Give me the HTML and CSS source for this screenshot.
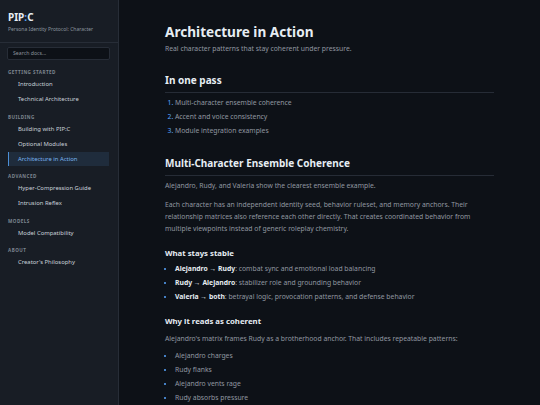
FILE: index.html
```html
<!DOCTYPE html>
<html lang="en">
<head>
  <meta charset="UTF-8">
  <meta name="viewport" content="width=device-width, initial-scale=1.0">
  <title>Architecture in Action - PIP:C</title>
  <link rel="stylesheet" href="styles.css">
</head>
<body>
<div class="layout">
  <!-- Sidebar -->
  <aside class="sidebar">
    <div class="brand">
      <div class="brand-title">PIP<span class="brand-colon">:</span>C</div>
      <div class="brand-sub">Persona Identity Protocol: Character</div>
    </div>
    <div class="search">Search docs...</div>

    <nav class="nav">
      <div class="nav-label first">Getting Started</div>
      <a class="nav-link">Introduction</a>
      <a class="nav-link">Technical Architecture</a>

      <div class="nav-label">Building</div>
      <a class="nav-link">Building with PIP:C</a>
      <a class="nav-link">Optional Modules</a>
      <a class="nav-link active">Architecture in Action</a>

      <div class="nav-label">Advanced</div>
      <a class="nav-link">Hyper-Compression Guide</a>
      <a class="nav-link">Intrusion Reflex</a>

      <div class="nav-label">Models</div>
      <a class="nav-link">Model Compatibility</a>

      <div class="nav-label">About</div>
      <a class="nav-link">Creator's Philosophy</a>
    </nav>
  </aside>

  <!-- Main content -->
  <main class="main">
    <div class="content">
      <h1 class="page-title">Architecture in Action</h1>
      <p class="page-sub">Real character patterns that stay coherent under pressure.</p>

      <h2 class="section-title">In one pass</h2>
      <ol class="toc">
        <li>Multi-character ensemble coherence</li>
        <li>Accent and voice consistency</li>
        <li>Module integration examples</li>
      </ol>

      <h2 class="section-title second">Multi-Character Ensemble Coherence</h2>
      <p class="lead">Alejandro, Rudy, and Valeria show the clearest ensemble example.</p>
      <p class="para">Each character has an independent identity seed, behavior ruleset, and memory anchors. Their relationship matrices also reference each other directly. That creates coordinated behavior from multiple viewpoints instead of generic roleplay chemistry.</p>

      <h3 class="sub-title">What stays stable</h3>
      <ul class="bullets">
        <li><strong>Alejandro → Rudy</strong>: combat sync and emotional load balancing</li>
        <li><strong>Rudy → Alejandro</strong>: stabilizer role and grounding behavior</li>
        <li><strong>Valeria → both</strong>: betrayal logic, provocation patterns, and defense behavior</li>
      </ul>

      <h3 class="sub-title second">Why it reads as coherent</h3>
      <p class="para tight">Alejandro's matrix frames Rudy as a brotherhood anchor. That includes repeatable patterns:</p>
      <ul class="bullets">
        <li>Alejandro charges</li>
        <li>Rudy flanks</li>
        <li>Alejandro vents rage</li>
        <li>Rudy absorbs pressure</li>
      </ul>
    </div>
  </main>
</div>
</body>
</html>
```

FILE: styles.css
```css
* {
  box-sizing: border-box;
}

html, body {
  margin: 0;
  height: 100%;
  overflow: hidden;
}

body {
  font-family: "Noto Sans", "Open Sans", sans-serif;
  background: #0d1117;
  color: #9198a1;
}

.layout {
  display: flex;
  height: 100vh;
}

/* Sidebar */
.sidebar {
  width: 119px;
  flex-shrink: 0;
  background: #181d25;
  border-right: 1px solid #272d37;
}

.brand {
  padding: 11px 8px 7px;
  border-bottom: 1px solid #272d37;
}

.brand-title {
  font-size: 10px;
  line-height: 13px;
  font-weight: 700;
  color: #e6edf3;
}

.brand-colon {
  color: #58a6ff;
}

.brand-sub {
  font-size: 5px;
  line-height: 11px;
  color: #8b949e;
}

.search {
  margin: 4px 8px 0 7px;
  height: 13px;
  padding: 0 5px;
  background: #0d1117;
  border: 1px solid #272d37;
  border-radius: 2px;
  font-size: 5.2px;
  line-height: 11px;
  color: #8b949e;
}

.nav {
  display: flex;
  flex-direction: column;
}

.nav-label {
  margin: 4.5px 0 0 8px;
  height: 10px;
  line-height: 10px;
  font-size: 4.6px;
  font-weight: 700;
  letter-spacing: 0.1em;
  text-transform: uppercase;
  color: #7d8590;
}

.nav-label.first {
  margin-top: 7px;
}

.nav-link {
  display: block;
  margin: 0 9px 0 8px;
  padding-left: 10px;
  height: 15px;
  line-height: 15px;
  font-size: 5.9px;
  color: #c9d1d9;
}

.nav-link.active {
  background: #1f2c3c;
  border-left: 1px solid #4c8fd6;
  padding-left: 9px;
  color: #79b4f2;
  height: 14px;
  line-height: 14px;
  margin-bottom: 1px;
}

/* Main */
.main {
  flex: 1;
  padding-top: 23px;
}

.content {
  max-width: 329px;
  margin: 0 auto;
}

.page-title {
  margin: 0;
  font-size: 13.6px;
  line-height: 18px;
  font-weight: 700;
  color: #e6edf3;
}

.page-sub {
  margin: 3px 0 0;
  font-size: 6.8px;
  line-height: 10px;
}

.section-title {
  margin: 19px 0 0;
  padding-bottom: 5px;
  border-bottom: 1px solid #262c36;
  font-size: 10px;
  line-height: 14px;
  font-weight: 700;
  color: #e6edf3;
}

.section-title.second {
  margin-top: 18px;
}

.toc,
.bullets {
  margin: 3px 0 0;
  padding-left: 10px;
  font-size: 6.8px;
  line-height: 14px;
}

.toc li::marker {
  color: #58a6ff;
}

.bullets li::marker {
  color: #58a6ff;
}

.bullets strong {
  color: #e6edf3;
}

.lead {
  margin: 4px 0 0;
  font-size: 6.8px;
  line-height: 12px;
}

.para {
  margin: 7px 0 0;
  font-size: 6.8px;
  line-height: 12px;
}

.para.tight {
  margin-top: 6px;
}

.sub-title {
  margin: 12px 0 0;
  font-size: 7.8px;
  line-height: 12px;
  font-weight: 700;
  color: #e6edf3;
}

.sub-title.second {
  margin-top: 11px;
}

.sub-title + .bullets {
  margin-top: 3px;
}

.para + .bullets {
  margin-top: 4px;
}
```
